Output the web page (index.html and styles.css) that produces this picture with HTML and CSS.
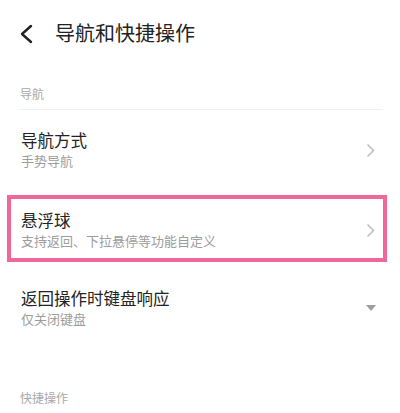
FILE: index.html
```html
<!DOCTYPE html>
<html lang="zh-CN">
<head>
    <meta charset="UTF-8">
    <meta name="viewport" content="width=device-width, initial-scale=1.0">
    <title>导航和快捷操作</title>
    <link rel="stylesheet" href="styles.css">
</head>
<body>
    <div class="header">
        <svg class="back" width="14" height="20" viewBox="0 0 14 20">
            <path d="M12 2 L3 10 L12 18" fill="none" stroke="#222" stroke-width="2.4" stroke-linecap="round" stroke-linejoin="round"/>
        </svg>
        <h1 class="title">导航和快捷操作</h1>
    </div>

    <div class="section-label first">导航</div>

    <div class="row row-first">
        <div class="row-text">
            <div class="row-title">导航方式</div>
            <div class="row-sub">手势导航</div>
        </div>
        <svg class="chevron" width="9" height="15" viewBox="0 0 9 15">
            <path d="M1.5 1.5 L7.5 7.5 L1.5 13.5" fill="none" stroke="#bdbdbd" stroke-width="1.5"/>
        </svg>
    </div>

    <div class="row highlight">
        <div class="row-text">
            <div class="row-title">悬浮球</div>
            <div class="row-sub">支持返回、下拉悬停等功能自定义</div>
        </div>
        <svg class="chevron" width="9" height="15" viewBox="0 0 9 15">
            <path d="M1.5 1.5 L7.5 7.5 L1.5 13.5" fill="none" stroke="#bdbdbd" stroke-width="1.5"/>
        </svg>
    </div>

    <div class="row row-last">
        <div class="row-text">
            <div class="row-title">返回操作时键盘响应</div>
            <div class="row-sub">仅关闭键盘</div>
        </div>
        <svg class="dropdown" width="10" height="6" viewBox="0 0 10 6">
            <path d="M0 0 L10 0 L5 6 Z" fill="#9e9e9e"/>
        </svg>
    </div>

    <div class="section-label second">快捷操作</div>
</body>
</html>
```

FILE: styles.css
```css
body { margin: 0; background-color: #ffffff; font-family: "Noto Sans CJK SC", "Noto Sans", sans-serif; color: #222; overflow: hidden; }
.header { display: flex; align-items: center; height: 66px; padding-left: 19px; }
.back { display: block; margin-top: 2px; }
.title { margin: 0 0 0 22px; font-size: 20px; line-height: 24px; font-weight: 400; color: #222; }
.section-label { font-size: 12px; line-height: 12px; color: #a8a8a8; padding-left: 2px; margin: 0 17px 0 18px; }
.section-label.first { padding-top: 22px; padding-bottom: 9px; border-bottom: 1px solid #f0f0f0; }
.section-label.second { margin-top: 52px; }
.row { display: flex; align-items: center; justify-content: space-between; margin: 0 13px 0 7px; border: 4px solid transparent; padding: 11px 8px 8px 10px; }
.row-first { margin-top: 5px; }
.highlight { margin-top: 13px; border-color: #f0689a; }
.row-last { margin-top: 11px; }
.row-title { font-size: 16.5px; line-height: 20px; color: #222; }
.row-sub { font-size: 13px; line-height: 18px; margin-top: 2px; color: #9d9d9d; }
.chevron { display: block; }
.dropdown { display: block; margin-right: -1px; }
```
